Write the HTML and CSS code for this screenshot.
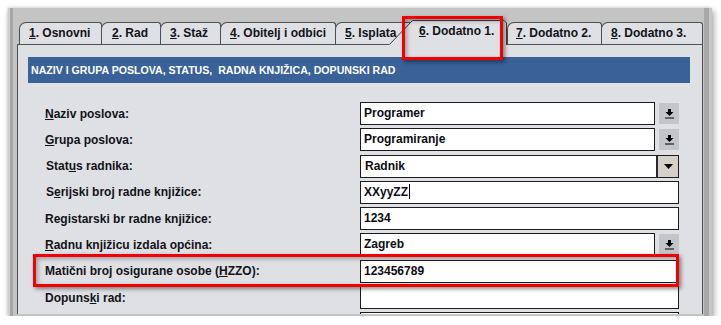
FILE: index.html
```html
<!DOCTYPE html>
<html lang="hr">
<head>
  <meta charset="UTF-8">
  <meta name="viewport" content="width=device-width, initial-scale=1.0">
  <title>Djelatnik - Dodatno 1.</title>
  <link rel="stylesheet" href="styles.css">
</head>
<body>
  <div class="window">
    <div class="tabs">
      <div class="tab tab1"><u>1</u>. Osnovni</div>
      <div class="tab tab2"><u>2</u>. Rad</div>
      <div class="tab tab3"><u>3</u>. Staž</div>
      <div class="tab tab4"><u>4</u>. Obitelj i odbici</div>
      <div class="tab tab5"><u>5</u>. Isplata</div>
      <div class="tab-active">
        <svg class="tab-shape" width="118" height="25" viewBox="0 0 118 25">
          <path d="M0 25 L0 24.5 L23.5 0 L115 0 L118 3 L118 25 Z" fill="#dfe0e4"/>
          <path d="M0.5 24.5 L23.5 0.5 L115 0.5 L117.5 3 L117.5 25" fill="none" stroke="#3a3a3a"/>
        </svg>
        <span class="tab-label"><u>6</u>. Dodatno 1.</span>
      </div>
      <div class="tab tab7"><u>7</u>. Dodatno 2.</div>
      <div class="tab tab8"><u>8</u>. Dodatno 3.</div>
    </div>

    <div class="panel">
      <div class="section-title">NAZIV I GRUPA POSLOVA, STATUS,&nbsp; RADNA KNJIŽICA, DOPUNSKI RAD</div>

      <div class="form">
        <div class="row">
          <span class="label"><u>N</u>aziv poslova:</span>
          <div class="field">
            <div class="input short">Programer</div>
            <div class="lookup">
              <svg width="9" height="10" viewBox="0 0 9 10"><rect x="3" y="0" width="3" height="3" fill="#000"/><polygon points="0.5,3 8.5,3 4.5,7" fill="#000"/><rect x="0" y="8.5" width="9" height="1" fill="#000"/></svg>
            </div>
          </div>
        </div>

        <div class="row">
          <span class="label"><u>G</u>rupa poslova:</span>
          <div class="field">
            <div class="input short">Programiranje</div>
            <div class="lookup">
              <svg width="9" height="10" viewBox="0 0 9 10"><rect x="3" y="0" width="3" height="3" fill="#000"/><polygon points="0.5,3 8.5,3 4.5,7" fill="#000"/><rect x="0" y="8.5" width="9" height="1" fill="#000"/></svg>
            </div>
          </div>
        </div>

        <div class="row">
          <span class="label label-shift">Stat<u>u</u>s radnika:</span>
          <div class="field">
            <div class="input combo">
              <span class="combo-text">Radnik</span>
              <span class="combo-btn">
                <svg width="9" height="5" viewBox="0 0 9 5"><polygon points="0,0 9,0 4.5,5" fill="#000"/></svg>
              </span>
            </div>
          </div>
        </div>

        <div class="row">
          <span class="label label-shift">S<u>e</u>rijski broj radne knjižice:</span>
          <div class="field">
            <div class="input">XXyyZZ<span class="caret"></span></div>
          </div>
        </div>

        <div class="row">
          <span class="label">Re<u>g</u>istarski br radne knjižice:</span>
          <div class="field">
            <div class="input">1234</div>
          </div>
        </div>

        <div class="row">
          <span class="label"><u>R</u>adnu knjižicu izdala općina:</span>
          <div class="field">
            <div class="input short">Zagreb</div>
            <div class="lookup">
              <svg width="9" height="10" viewBox="0 0 9 10"><rect x="3" y="0" width="3" height="3" fill="#000"/><polygon points="0.5,3 8.5,3 4.5,7" fill="#000"/><rect x="0" y="8.5" width="9" height="1" fill="#000"/></svg>
            </div>
          </div>
        </div>

        <div class="row">
          <span class="label">Matični broj osigurane osobe (<u>H</u>ZZO):</span>
          <div class="field">
            <div class="input">123456789</div>
          </div>
        </div>

        <div class="row">
          <span class="label">Dopuns<u>k</u>i rad:</span>
          <div class="field">
            <div class="input"></div>
          </div>
        </div>

        <div class="row">
          <span class="label"></span>
          <div class="field">
            <div class="input"></div>
          </div>
        </div>
      </div>
    </div>

    <div class="mark mark-tab"></div>
    <div class="mark mark-row"></div>
  </div>
</body>
</html>
```

FILE: styles.css
```css
html, body {
  margin: 0;
  padding: 0;
  background: #ffffff;
  overflow: hidden;
}
body {
  font-family: "Liberation Sans", Arial, sans-serif;
  font-size: 12px;
  font-weight: bold;
  color: #121218;
}
u {
  text-decoration-thickness: 1px;
  text-underline-offset: 1px;
}

.window {
  position: relative;
  box-sizing: border-box;
  width: 704px;
  height: 308px;
  margin: 8px 0 0 8px;
  padding: 14px 0 0 9px;
  background: linear-gradient(to right,
    #d0d0d0 0 2px, #a6a6a6 2px 5px, #c4c4c4 5px 696px,
    #a8a8a8 696px 701px, #c6c6c6 701px);
  box-shadow: 2px 3px 6px rgba(0, 0, 0, 0.35), -1px -1px 3px rgba(0, 0, 0, 0.12);
}

/* tabs */
.tabs {
  display: flex;
  align-items: flex-end;
  height: 22px;
  margin-left: 2px;
}
.tab {
  position: relative;
  box-sizing: border-box;
  height: 22px;
  padding-left: 9px;
  margin-right: -1px;
  border: 1px solid #4e4e4e;
  border-bottom: none;
  border-radius: 7px 3px 0 0;
  background: #dfe0e4;
  line-height: 21px;
  white-space: nowrap;
  overflow: hidden;
}
.tab1 { width: 83px; }
.tab2 { width: 60px; padding-left: 10px; }
.tab3 { width: 61px; }
.tab4 { width: 116px; }
.tab5 { width: 80px; margin-right: -26px; }
.tab7 { width: 95px; padding-left: 8px; }
.tab8 { width: 102px; margin-right: 0; }

.tab-active {
  position: relative;
  z-index: 2;
  width: 118px;
  height: 25px;
  margin-bottom: -1px;
  flex-shrink: 0;
}
.tab-shape {
  position: absolute;
  left: 0;
  top: 0;
}
.tab-label {
  position: relative;
  display: block;
  padding: 1px 0 0 30px;
  line-height: 21px;
  white-space: nowrap;
}

/* panel */
.panel {
  position: relative;
  z-index: 1;
  box-sizing: border-box;
  width: 686px;
  height: 270px;
  padding: 12px 12px 0 10px;
  border: 1px solid #4e4e4e;
  border-bottom: none;
  background: #dfe0e4;
  overflow: hidden;
}
.section-title {
  height: 26px;
  padding-left: 3px;
  background: #3a6198;
  color: #ffffff;
  font-size: 10.6px;
  line-height: 26px;
  white-space: nowrap;
}

.form {
  display: flex;
  flex-direction: column;
  gap: 3.3px;
  margin-top: 19px;
  padding-left: 17px;
}
.row {
  display: flex;
  align-items: center;
  height: 23px;
}
.label {
  width: 315px;
  flex-shrink: 0;
  white-space: nowrap;
}
.label-shift {
  padding-left: 1px;
  box-sizing: border-box;
}
.field {
  display: flex;
  align-items: center;
  width: 319px;
}
.input {
  box-sizing: border-box;
  width: 319px;
  height: 23px;
  padding-left: 3px;
  border: 1px solid #1c1c1c;
  background: #ffffff;
  color: #0c0c14;
  line-height: 21px;
  white-space: nowrap;
}
.input.short {
  width: 295px;
}
.lookup {
  display: flex;
  align-items: center;
  justify-content: center;
  width: 20px;
  height: 21px;
  margin-left: 4px;
  background: #c3c5cb;
}
.combo {
  display: flex;
  padding-left: 4px;
}
.combo-text {
  flex: 1;
}
.combo-btn {
  display: flex;
  align-items: center;
  justify-content: center;
  box-sizing: border-box;
  width: 22px;
  height: 21px;
  border-left: 2px solid #2a2a2a;
  background: #d5d1c9;
}
.caret {
  display: inline-block;
  width: 1px;
  height: 15px;
  margin-left: 1px;
  background: #000;
  vertical-align: -3px;
}

/* red highlight marks */
.mark {
  position: absolute;
  z-index: 5;
  box-sizing: border-box;
  border: 3px solid #f00000;
  box-shadow: 2px 2px 4px rgba(0, 0, 0, 0.45), inset 2px 2px 4px rgba(0, 0, 0, 0.3);
}
.mark-tab {
  left: 394px;
  top: 8px;
  width: 101px;
  height: 44px;
}
.mark-row {
  left: 25px;
  top: 246px;
  width: 646px;
  height: 33px;
}
```
